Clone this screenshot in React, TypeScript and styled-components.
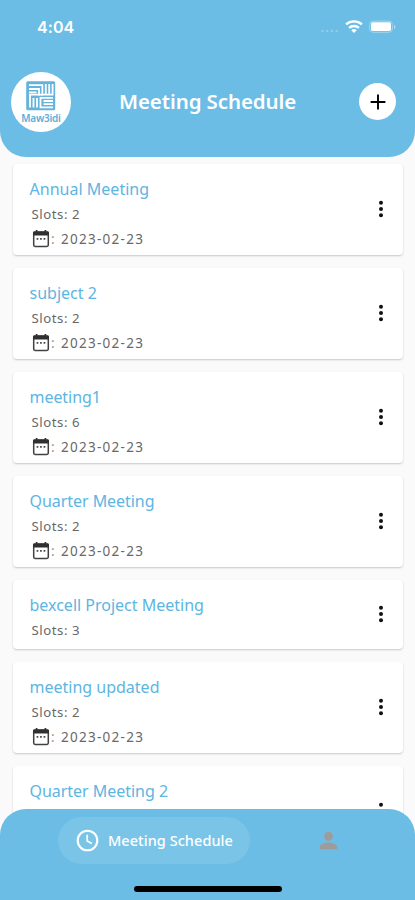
import React from 'react';
import styled, { createGlobalStyle } from 'styled-components';

const BLUE = '#6bbde6';

const GlobalStyle = createGlobalStyle`
  * { box-sizing: border-box; }
  body {
    margin: 0;
    background: #fafafa;
    font-family: 'Noto Sans', 'Open Sans', sans-serif;
  }
`;

const Screen = styled.div`
  width: 415px;
  height: 900px;
  overflow: hidden;
  display: flex;
  flex-direction: column;
  background: #fafafa;
`;

const Header = styled.header`
  flex: none;
  height: 157px;
  background: ${BLUE};
  border-radius: 0 0 26px 26px;
`;

const StatusBar = styled.div`
  height: 54px;
  padding: 0 18px 0 37px;
  display: flex;
  align-items: center;
  justify-content: space-between;
`;

const Time = styled.span`
  color: #fff;
  font: 600 16px/20px Inter, sans-serif;
  letter-spacing: 0.1px;
`;

const StatusIcons = styled.div`
  display: flex;
  align-items: center;
  height: 20px;
`;

const TitleBar = styled.div`
  height: 95px;
  padding: 0 19px 0 11px;
  display: grid;
  grid-template-columns: 60px 1fr 37px;
  align-items: center;
`;

const Logo = styled.div`
  width: 60px;
  height: 60px;
  border-radius: 50%;
  background: #fff;
  display: flex;
  flex-direction: column;
  align-items: center;
  padding-top: 9px;
`;

const LogoName = styled.span`
  color: #5aaeda;
  font-size: 10px;
  line-height: 13px;
  margin-top: 1px;
  font-weight: 600;
  letter-spacing: -0.25px;
`;

const PageTitle = styled.h1`
  margin: 0 0 1px 48px;
  color: #fff;
  font-size: 20.5px;
  line-height: 28px;
  font-weight: 600;
  letter-spacing: -0.1px;
  white-space: nowrap;
`;

const AddButton = styled.button`
  width: 37px;
  height: 37px;
  padding: 0;
  border: 0;
  border-radius: 50%;
  background: #fff;
  display: flex;
  align-items: center;
  justify-content: center;
`;

const List = styled.main`
  flex: none;
  height: 660px;
  overflow: hidden;
  padding: 7px 12px 0 13px;
  display: flex;
  flex-direction: column;
  gap: 13px;
`;

const Card = styled.article<{ $short?: boolean }>`
  flex: none;
  height: ${(p) => (p.$short ? 69 : 91)}px;
  padding: 14px 16px 0 16.5px;
  background: #fff;
  border-radius: 4px;
  box-shadow: 0 1px 2px rgba(0, 0, 0, 0.2);
  display: grid;
  grid-template-columns: 1fr 12px;
`;

const CardTitle = styled.h2<{ $track: number }>`
  margin: 0;
  color: #5db5e2;
  font-size: 16px;
  line-height: 22px;
  font-weight: 400;
  letter-spacing: ${(p) => p.$track}px;
`;

const Slots = styled.div`
  margin: 3px 0 0 2px;
  color: #686868;
  font-size: 13.2px;
  line-height: 22px;
  letter-spacing: 0.55px;
`;

const DateRow = styled.div`
  margin-left: 1.5px;
  display: flex;
  align-items: center;
  color: #686868;
  font-size: 13.5px;
  line-height: 28px;
  letter-spacing: 1.27px;
`;

const Colon = styled.span`
  width: 10px;
  color: #999;
`;

const Menu = styled.div<{ $short?: boolean }>`
  height: ${(p) => (p.$short ? 40 : 62)}px;
  display: flex;
  align-items: center;
  justify-content: center;
`;

const BottomBar = styled.footer`
  flex: none;
  position: relative;
  height: 91px;
  margin-top: -8px;
  background: ${BLUE};
  border-radius: 26px 26px 0 0;
  display: flex;
  flex-direction: column;
  align-items: center;
`;

const Tabs = styled.nav`
  width: 100%;
  height: 63px;
  padding-left: 58px;
  display: flex;
  align-items: center;
`;

const ActiveTab = styled.div`
  width: 192px;
  height: 47px;
  padding-left: 18px;
  border-radius: 24px;
  background: #7ac4e8;
  display: flex;
  align-items: center;
  gap: 9px;
  color: #fff;
  font-size: 14.5px;
  font-weight: 500;
  letter-spacing: 0.05px;
  white-space: nowrap;
`;

const TabLabel = styled.span`
  padding-bottom: 2px;
`;

const ProfileTab = styled.div`
  margin-left: 67px;
  display: flex;
`;

const HomeIndicator = styled.div`
  margin-top: 14px;
  width: 148px;
  height: 6px;
  border-radius: 3px;
  background: #000;
`;

const LogoMark = () => (
  <svg width="30" height="30" viewBox="0 0 30 30">
    <rect x="0.2" y="0.2" width="29" height="29" rx="1.5" fill="#65b3dd" />
    <g fill="none" stroke="#fff" strokeWidth="1.8">
      <path d="M3 4.2h13.4v10.2M3 8h10v6.4M3 11.3h7.5" />
      <path d="M19.8 3v10.7M23.2 3v10.7M26.6 3v10.7H3" />
      <path d="M4 14v12.5M7.5 17v9.5M11 17v9.5" />
      <path d="M27 16.9H14.5v9.4H27M17.5 20h9.5M17.5 23.2h9.5" />
    </g>
  </svg>
);

const StatusGlyphs = () => (
  <svg width="76" height="20" viewBox="0 0 76 20">
    <g fill="#8fcdec">
      <circle cx="1.5" cy="14" r="1.2" />
      <circle cx="6.2" cy="14" r="1.2" />
      <circle cx="10.9" cy="14" r="1.2" />
      <circle cx="15.6" cy="14" r="1.2" />
    </g>
    <g fill="none" stroke="#fff" strokeWidth="2.4">
      <path d="M25.1 7.3a12 12 0 0 1 15.8 0" />
      <path d="M28.1 10.9a7.2 7.2 0 0 1 9.8 0" />
    </g>
    <path d="M33 16l-2.7-2.8a4 4 0 0 1 5.4 0z" fill="#fff" />
    <rect x="48.6" y="4.1" width="22.8" height="11.2" rx="3.4" fill="none" stroke="#a0d5ef" />
    <rect x="50" y="5.3" width="20" height="8.8" rx="1.8" fill="#fff" />
    <path d="M73 8v4q1.4-.6 1.4-2t-1.4-2z" fill="#b5def3" />
  </svg>
);

const CalendarIcon = () => (
  <svg width="20" height="20" viewBox="0 0 20 20">
    <path d="M5.6 1v3M14.4 1v3" stroke="#303030" strokeWidth="1.7" />
    <rect x="2.7" y="3.1" width="14.6" height="14.4" rx="1.4" fill="#fff" stroke="#404040" strokeWidth="1.5" />
    <path d="M2 3.6q0-1.2 1.2-1.2h13.6q1.2 0 1.2 1.2v3H2z" fill="#303030" />
    <path d="M5.6 9h1.7v1.7H5.6zM9.1 9h1.7v1.7H9.1zM12.6 9h1.7v1.7h-1.7z" fill="#444" />
  </svg>
);

const DotsIcon = () => (
  <svg width="6" height="18" viewBox="0 0 6 18">
    <g fill="#111">
      <circle cx="3" cy="2.8" r="2" />
      <circle cx="3" cy="9" r="2" />
      <circle cx="3" cy="15.2" r="2" />
    </g>
  </svg>
);

type Meeting = { title: string; slots?: number; date?: string; track: number };

const meetings: Meeting[] = [
  { title: 'Annual Meeting', slots: 2, date: '2023-02-23', track: 0.02 },
  { title: 'subject 2', slots: 2, date: '2023-02-23', track: 0 },
  { title: 'meeting1', slots: 6, date: '2023-02-23', track: -0.05 },
  { title: 'Quarter Meeting', slots: 2, date: '2023-02-23', track: -0.05 },
  { title: 'bexcell Project Meeting', slots: 3, track: 0 },
  { title: 'meeting updated', slots: 2, date: '2023-02-23', track: 0 },
  { title: 'Quarter Meeting 2', track: -0.03 },
];

const MeetingCard = ({ title, slots, date, track }: Meeting) => {
  const short = slots !== undefined && !date;
  return (
    <Card $short={short}>
      <div>
        <CardTitle $track={track}>{title}</CardTitle>
        {slots !== undefined && <Slots>Slots: {slots}</Slots>}
        {date && (
          <DateRow>
            <CalendarIcon />
            <Colon>:</Colon>
            <span>{date}</span>
          </DateRow>
        )}
      </div>
      <Menu $short={short}>
        <DotsIcon />
      </Menu>
    </Card>
  );
};

export default function App() {
  return (
    <>
      <GlobalStyle />
      <Screen>
        <Header>
          <StatusBar>
            <Time>4:04</Time>
            <StatusIcons>
              <StatusGlyphs />
            </StatusIcons>
          </StatusBar>
          <TitleBar>
            <Logo>
              <LogoMark />
              <LogoName>Maw3idi</LogoName>
            </Logo>
            <PageTitle>Meeting Schedule</PageTitle>
            <AddButton aria-label="Add">
              <svg width="16" height="16" viewBox="0 0 16 16">
                <path d="M8 .6v14.8M.6 8h14.8" stroke="#000" strokeWidth="1.9" />
              </svg>
            </AddButton>
          </TitleBar>
        </Header>
        <List>
          {meetings.map((m) => (
            <MeetingCard key={m.title} {...m} />
          ))}
        </List>
        <BottomBar>
          <Tabs>
            <ActiveTab>
              <svg width="23" height="23" viewBox="0 0 23 23" fill="none" stroke="#fff" strokeWidth="2.1">
                <circle cx="11.5" cy="11.5" r="9.8" />
                <path d="M11.2 5.8v6.1l4.6 2.7" strokeWidth="1.7" />
              </svg>
              <TabLabel>Meeting Schedule</TabLabel>
            </ActiveTab>
            <ProfileTab>
              <svg width="23" height="23" viewBox="0 0 23 23" fill="#a09b98">
                <circle cx="11.5" cy="7.3" r="4.4" />
                <path d="M2.8 20.2v-2.4c0-3 5.8-4.4 8.7-4.4s8.7 1.4 8.7 4.4v2.4z" />
              </svg>
            </ProfileTab>
          </Tabs>
          <HomeIndicator />
        </BottomBar>
      </Screen>
    </>
  );
}
